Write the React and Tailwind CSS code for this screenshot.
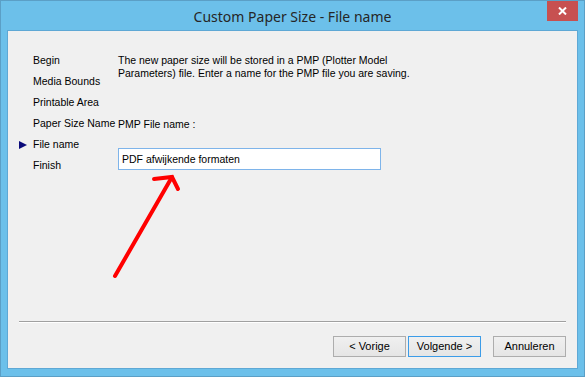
import React from "react";

const steps = ["Begin", "Media Bounds", "Printable Area", "Paper Size Name", "File name", "Finish"];

const WizardButton = ({ children, active }) => (
  <button
    className={
      "h-[21px] w-[73px] border text-[11px] text-black bg-gradient-to-b from-[#f0f0f0] to-[#e5e5e5] " +
      (active ? "border-[#3c9ce8]" : "border-[#adadad]")
    }
  >
    {children}
  </button>
);

export default function App() {
  return (
    <div
      className="w-[585px] h-[377px] bg-[#6cc0ea] border border-[#5b9fc6] flex flex-col"
      style={{ fontFamily: '"Liberation Sans", Arial, sans-serif' }}
    >
      {/* Title bar */}
      <div className="relative h-[29px] flex items-center justify-center">
        <span
          className="text-[14px] text-[#262626] mt-[2px]"
          style={{ fontFamily: '"Noto Sans", "Open Sans", sans-serif' }}
        >
          Custom Paper Size - File name
        </span>
        <div className="absolute right-[6px] top-0 w-[31px] h-[20px] bg-[#c75050] flex items-center justify-center">
          <svg width="9" height="8" viewBox="0 0 9 8">
            <path d="M1 0.5 L8 7.5 M8 0.5 L1 7.5" stroke="#fff" strokeWidth="2" />
          </svg>
        </div>
      </div>

      {/* Client area */}
      <div className="relative mx-[6px] h-[339px] bg-[#f0f0f0] border border-[#5ea8d5] flex flex-col text-[11px] text-black">
        <div className="flex-1 flex pt-[19px]">
          {/* Step list */}
          <div className="w-[110px] flex">
            <div className="w-[25px] flex flex-col">
              {steps.map((s) => (
                <div key={s} className="h-[21px] flex items-center pl-[11px]">
                  {s === "File name" && (
                    <svg width="8" height="8" viewBox="0 0 8 8">
                      <path d="M0 0 L8 4 L0 8 Z" fill="#0a0a7a" />
                    </svg>
                  )}
                </div>
              ))}
            </div>
            <ul className="flex flex-col text-[10.5px]">
              {steps.map((s) => (
                <li key={s} className="h-[21px] leading-[21px] whitespace-nowrap">
                  {s}
                </li>
              ))}
            </ul>
          </div>

          {/* Page content */}
          <div className="flex flex-col">
            <p className="mt-[4px] leading-[13px] whitespace-nowrap text-[10.5px]">
              The new paper size will be stored in a PMP (Plotter Model
              <br />
              Parameters) file. Enter a name for the PMP file you are saving.
            </p>
            <div className="mt-[34px] h-[21px] leading-[21px] text-[10.5px]">PMP File name :</div>
            <div className="mt-[13px] w-[263px] h-[22px] bg-white border border-[#7eb4ea] px-[3px] leading-[20px] text-[10.5px]">
              PDF afwijkende formaten
            </div>
          </div>
        </div>

        {/* Separator */}
        <div className="mx-[11px] border-t border-b border-t-[#a0a0a0] border-b-white" />

        {/* Buttons */}
        <div className="flex justify-end items-center pr-[11px] pt-[13px] pb-[11px]">
          <WizardButton>&lt; Vorige</WizardButton>
          <div className="w-[2px]" />
          <WizardButton active>Volgende &gt;</WizardButton>
          <div className="w-[12px]" />
          <WizardButton>Annuleren</WizardButton>
        </div>

        {/* Red annotation arrow */}
        <svg className="absolute left-0 top-0 pointer-events-none" width="577" height="339">
          <g stroke="#ff0000" strokeWidth="4" strokeLinecap="round" fill="none">
            <path d="M107 245 L164 146" />
            <path d="M146 148 L164 146 L170 158" />
          </g>
        </svg>
      </div>
    </div>
  );
}
